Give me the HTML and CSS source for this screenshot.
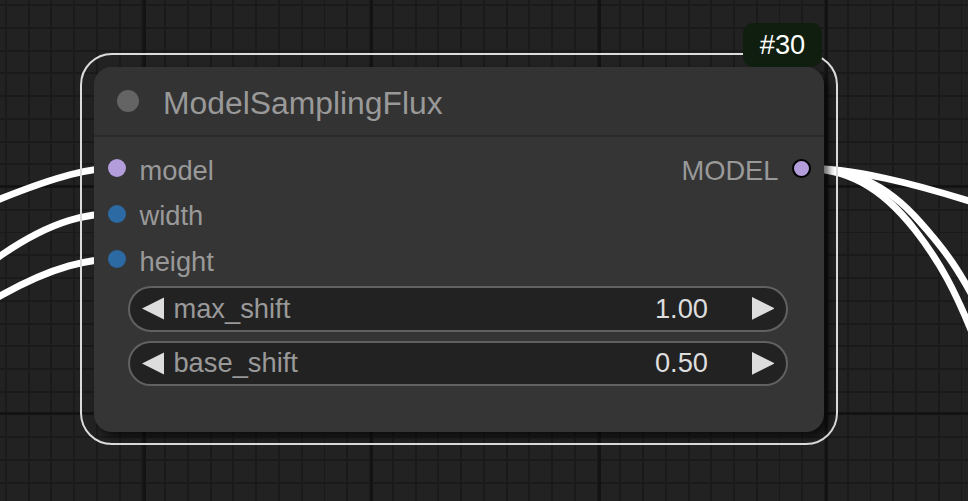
FILE: index.html
```html
<!DOCTYPE html>
<html>
<head>
<meta charset="utf-8">
<link rel="stylesheet" href="styles.css">
</head>
<body>
<div class="canvas">
  <svg class="links" width="968" height="501" viewBox="0 0 968 501">
    <path d="M117 168 C90 168 60 175 0 199 L-40 215"/>
    <path d="M117 213.5 C90 213.5 55 218 0 256 L-40 284"/>
    <path d="M117 259 C90 259 55 265 0 296 L-40 319"/>
    <path d="M801 168 C850 168 910 181 1000 211"/>
    <path d="M801 168 C850 168 885 182 920 222 C945 250 960 270 985 320"/>
    <path d="M801 168 C845 168 880 185 915 230 C940 262 955 290 975 340"/>
  </svg>
  <div class="selection"></div>
  <div class="node">
    <div class="node-title">
      <span class="title-dot"></span>
      <span class="title-text">ModelSamplingFlux</span>
    </div>
    <div class="slots">
      <div class="slot-row">
        <div class="input"><span class="dot dot-model"></span><span class="slot-label">model</span></div>
        <div class="output"><span class="slot-label">MODEL</span><span class="dot dot-model dot-out"></span></div>
      </div>
      <div class="slot-row">
        <div class="input"><span class="dot dot-int"></span><span class="slot-label">width</span></div>
      </div>
      <div class="slot-row">
        <div class="input"><span class="dot dot-int"></span><span class="slot-label">height</span></div>
      </div>
    </div>
    <div class="widgets">
      <div class="widget">
        <svg class="arrow" viewBox="0 0 22.75 22.75"><polygon points="22.75,0 0,11.375 22.75,22.75"/></svg>
        <span class="w-label">max_shift</span>
        <span class="w-value">1.00</span>
        <svg class="arrow" viewBox="0 0 22.75 22.75"><polygon points="0,0 22.75,11.375 0,22.75"/></svg>
      </div>
      <div class="widget">
        <svg class="arrow" viewBox="0 0 22.75 22.75"><polygon points="22.75,0 0,11.375 22.75,22.75"/></svg>
        <span class="w-label">base_shift</span>
        <span class="w-value">0.50</span>
        <svg class="arrow" viewBox="0 0 22.75 22.75"><polygon points="0,0 22.75,11.375 0,22.75"/></svg>
      </div>
    </div>
  </div>
  <div class="badge">#30</div>
</div>
</body>
</html>
```
FILE: styles.css
```css
* { box-sizing: border-box; }
html, body { margin: 0; padding: 0; background: #222; }
body { font-family: "Liberation Sans", Arial, sans-serif; }

.canvas {
  position: relative;
  width: 968px;
  height: 501px;
  overflow: hidden;
  background-color: #222222;
  background-image:
    repeating-linear-gradient(90deg, transparent 0 143px, #131313 143px 146px, transparent 146px 227.5px),
    repeating-linear-gradient(180deg, transparent 0 185px, #131313 185px 188px, transparent 188px 227.5px),
    repeating-linear-gradient(90deg, transparent 0 5px, #1a1a1a 5px 7px, transparent 7px 22.75px),
    repeating-linear-gradient(180deg, transparent 0 4px, #1a1a1a 4px 6px, transparent 6px 22.75px);
}

.links {
  position: absolute;
  left: 0;
  top: 0;
}
.links path {
  fill: none;
  stroke: #fff;
  stroke-width: 6.8;
}

.selection {
  position: absolute;
  left: 80px;
  top: 53px;
  width: 758px;
  height: 392px;
  border: 2px solid #dcdcdc;
  border-radius: 32px;
}

.node {
  position: absolute;
  left: 94px;
  top: 67px;
  width: 730px;
  height: 365px;
  background: #353535;
  border-radius: 18px;
  box-shadow: 5px 5px 7px rgba(0, 0, 0, 0.6);
  display: flex;
  flex-direction: column;
}

.node-title {
  height: 70px;
  background: #333333;
  border-radius: 18px 18px 0 0;
  border-bottom: 2px solid #2a2a2a;
  display: flex;
  align-items: center;
  padding-left: 22.6px;
}
.title-dot {
  width: 22.8px;
  height: 22.8px;
  border-radius: 50%;
  background: #646464;
  flex: none;
}
.title-text {
  margin-left: 23.6px;
  margin-top: 4px;
  font-size: 31.85px;
  color: #999;
  white-space: nowrap;
}

.slots {
  padding-top: 8.25px;
  display: flex;
  flex-direction: column;
}
.slot-row {
  height: 45.5px;
  display: flex;
  align-items: center;
  justify-content: space-between;
}
.input {
  display: flex;
  align-items: center;
  padding-left: 14px;
}
.output {
  display: flex;
  align-items: center;
  padding-right: 13.25px;
}
.slot-label {
  font-size: 27.3px;
  color: #999;
  margin-top: 5px;
  white-space: nowrap;
}
.input .slot-label { margin-left: 13.5px; }
.output .slot-label { margin-right: 13.25px; }

.dot {
  width: 18px;
  height: 18px;
  border-radius: 50%;
  flex: none;
}
.dot-model { background: #b39ddb; }
.dot-int { background: #2c6aa3; }
.dot-out {
  width: 19px;
  height: 19px;
  border: 2px solid #000;
}

.widgets {
  margin-top: 4.25px;
  display: flex;
  flex-direction: column;
  gap: 9.1px;
  padding-left: 34px;
  padding-right: 36px;
}
.widget {
  height: 45.5px;
  border: 2px solid #616161;
  border-radius: 23px;
  background: #222;
  display: flex;
  align-items: center;
  padding: 0 11.6px;
  font-size: 27.3px;
}
.arrow {
  width: 22.75px;
  height: 22.75px;
  flex: none;
}
.arrow polygon { fill: #ddd; }
.w-label {
  margin-left: 9.1px;
  color: #999;
  white-space: nowrap;
}
.w-value {
  margin-left: auto;
  margin-right: 43.6px;
  color: #ddd;
}

.badge {
  position: absolute;
  left: 743px;
  top: 23px;
  width: 79px;
  height: 44px;
  border-radius: 10px;
  background: #0f1e0f;
  color: #fff;
  font-size: 27.3px;
  display: flex;
  align-items: center;
  justify-content: center;
}
```
